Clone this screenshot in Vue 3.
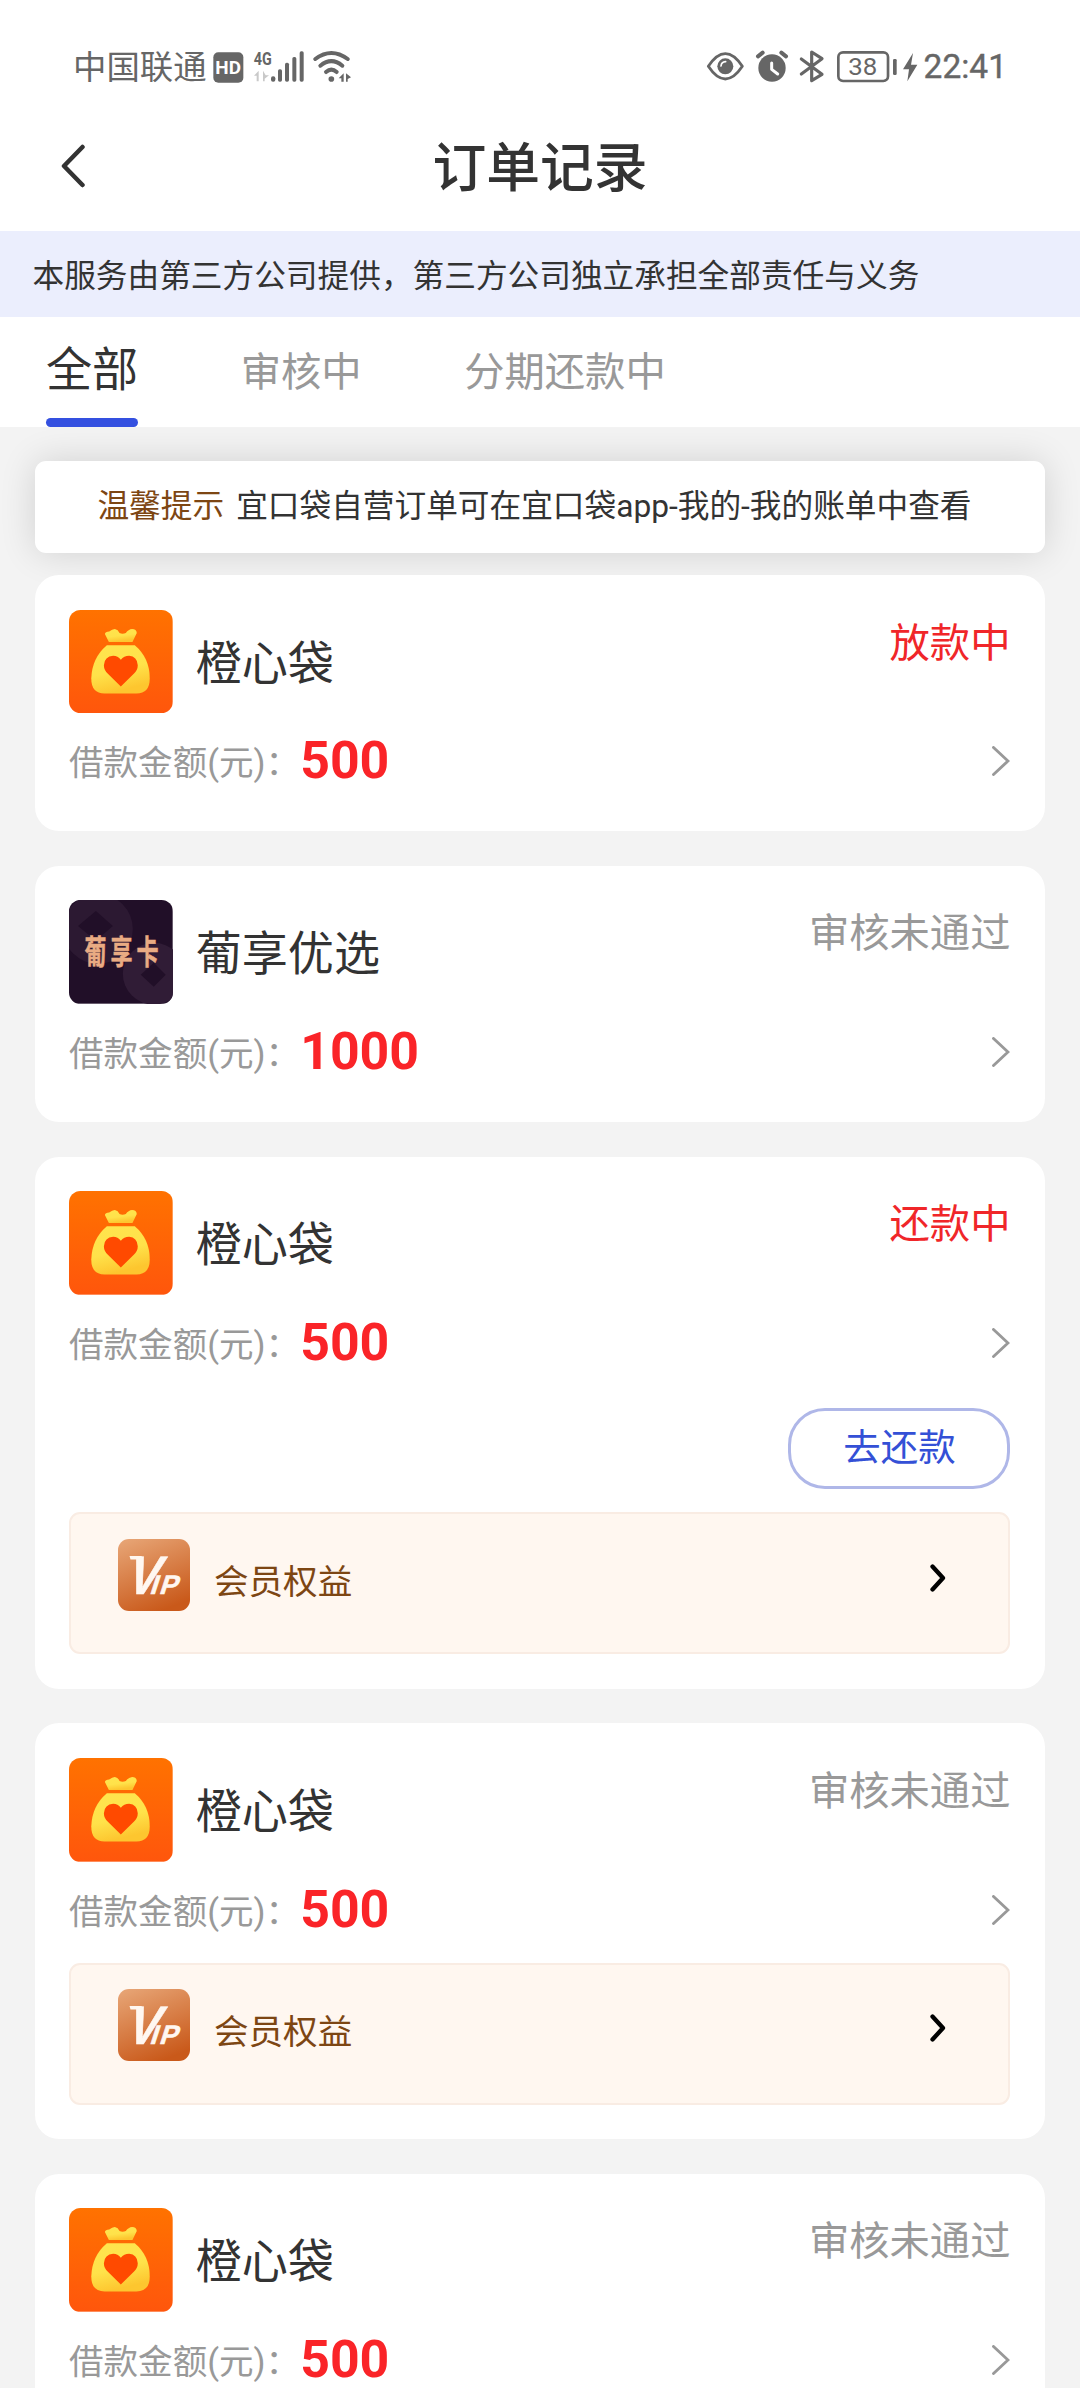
<script setup>
const notice = '本服务由第三方公司提供，第三方公司独立承担全部责任与义务'
const tabs = ['全部', '审核中', '分期还款中']
const orders = [
  { name: '橙心袋', logo: 'bag', status: '放款中', active: true, amount: 500 },
  { name: '葡享优选', logo: 'card', status: '审核未通过', amount: 1000 },
  { name: '橙心袋', logo: 'bag', status: '还款中', active: true, amount: 500, repay: true, vip: true },
  { name: '橙心袋', logo: 'bag', status: '审核未通过', amount: 500, vip: true },
  { name: '橙心袋', logo: 'bag', status: '审核未通过', amount: 500 },
]
</script>

<template>
  <div class="page">
    <div class="statusbar">
      <span class="carrier">中国联通</span>
      <svg class="net" viewBox="515 50 425 110" fill="#666">
        <rect x="519" y="63" width="90" height="91" rx="15" />
        <text x="525" y="129" font-size="56" font-weight="700" fill="#fff" textLength="77" lengthAdjust="spacingAndGlyphs">HD</text>
        <text x="640" y="101" font-size="57" font-weight="700" textLength="54" lengthAdjust="spacingAndGlyphs">4G</text>
        <path d="M641 133l14-15v32h-6v-17zM668 118v32l5 0v-8l13-10h-10z" fill="#c9c9c9" />
        <rect x="692" y="135" width="13" height="16" rx="6" />
        <rect x="713" y="114" width="12" height="37" rx="5" />
        <rect x="734" y="94" width="12" height="57" rx="5" />
        <rect x="756" y="77" width="12" height="74" rx="5" />
        <rect x="778" y="60" width="12" height="91" rx="5" />
        <g fill="none" stroke="#666" stroke-width="12" stroke-linecap="round">
          <path d="M825 83Q873 47 922 83" />
          <path d="M840 103Q873 76 906 103" />
          <path d="M857 122Q873 108 889 122" />
        </g>
        <circle cx="873" cy="143" r="8.5" />
        <path d="M895 141l15-15v25h-7v-10zM917 126l15 12-10 5v8h-5z" />
      </svg>
      <svg class="sys" viewBox="45 50 650 110" fill="#666">
        <path d="M55 105Q80 67 106 67T157 105Q132 143 106 143T55 105z" fill="none" stroke="#666" stroke-width="8.500" stroke-linejoin="round" />
        <circle cx="106" cy="105" r="24" />
        <path d="M93 104q1-12 14-13" fill="none" stroke="#fff" stroke-width="5" stroke-linecap="round" />
        <circle cx="246" cy="110" r="41" />
        <path d="M204 75l14-11M288 75l-14-11" stroke="#666" stroke-width="12" stroke-linecap="round" />
        <path d="M245 95v19l18 14" fill="none" stroke="#fff" stroke-width="9" stroke-linecap="round" stroke-linejoin="round" />
        <path d="M334 83l62 46-31 19V62l31 20-62 46" fill="none" stroke="#666" stroke-width="9.500" stroke-linecap="round" stroke-linejoin="round" />
        <rect x="445" y="63" width="149" height="86" rx="14" fill="none" stroke="#666" stroke-width="8" />
        <rect x="609" y="83" width="11" height="48" rx="4" />
        <text x="475" y="131" font-size="71" textLength="87" lengthAdjust="spacingAndGlyphs">38</text>
        <path d="M669 65l-30 49h18l-5 36 30-50h-19z" />
      </svg>
      <span class="time">22:41</span>
    </div>

    <header class="titlebar">
      <svg class="back" viewBox="0 0 26 44"><path d="M22.500 3L4 22l18.500 19" /></svg>
      <h1>订单记录</h1>
    </header>

    <div class="notice">{{ notice }}</div>

    <nav class="tabs">
      <div v-for="(tab, i) in tabs" :key="tab" class="tab" :class="{ current: i === 0 }">
        <span>{{ tab }}</span>
      </div>
    </nav>

    <div class="tip"><b>温馨提示</b><span>宜口袋自营订单可在宜口袋app-我的-我的账单中查看</span></div>

    <main class="list">
      <section v-for="(order, i) in orders" :key="i" class="card">
        <div class="head">
          <svg v-if="order.logo === 'bag'" class="logo" viewBox="57 60 312 312">
            <defs>
              <linearGradient id="orange" x1="0" y1="0" x2="0" y2="1">
                <stop offset="0" stop-color="#ff7200" /><stop offset="1" stop-color="#ff560c" />
              </linearGradient>
              <linearGradient id="gold" x1="0" y1="0" x2=".3" y2="1">
                <stop offset="0" stop-color="#ffe44e" /><stop offset=".6" stop-color="#ffe24a" /><stop offset="1" stop-color="#fdc62f" />
              </linearGradient>
            </defs>
            <rect x="57" y="60" width="312" height="312" fill="url(#orange)" />
            <path d="M177 156L165 132Q166 126 178 125Q187 117 195 117Q205 119 209 129Q218 134 228 129Q236 118 247 117Q260 117 261 129L248 156z" fill="url(#gold)" />
            <path d="M171 166H255Q300 204 300 266Q300 311 260 311H164Q124 311 124 266Q126 204 171 166z" fill="url(#gold)" />
            <path d="M213 290L174 252Q162 240 162 226Q164 200 190 198Q204 198 213 210Q222 198 238 198Q262 200 264 226Q264 240 252 252z" fill="#ff4a00" />
          </svg>
          <svg v-else class="logo" viewBox="0 0 104 104">
            <rect width="104" height="104" fill="#210f28" />
            <circle cx="29" cy="29" r="35" fill="#2c1932" />
            <path d="M27 11L44 26 27 41 9 26z" fill="#210f28" />
            <circle cx="85" cy="74" r="31" fill="#301c36" />
            <path d="M85 63L97 75 85 87 72 75z" fill="#210f28" />
            <g class="brand" transform="translate(15.500 64.500) scale(.67 1)"><text letter-spacing="6">葡享卡</text></g>
          </svg>
          <span class="name">{{ order.name }}</span>
          <span class="status" :class="{ active: order.active }">{{ order.status }}</span>
        </div>
        <div class="sum">
          <span class="label">借款金额(元)：</span>
          <span class="amount">{{ order.amount }}</span>
          <svg class="more" viewBox="0 0 18 30"><path d="M1.500 1.500L16 15 1.500 28.500" /></svg>
        </div>
        <div v-if="order.repay" class="actions"><button>去还款</button></div>
        <div v-if="order.vip" class="vip" :class="{ spaced: order.repay }">
          <svg class="vip-logo" viewBox="0 0 72 72">
            <defs>
              <linearGradient id="bronze" x1=".2" y1="0" x2=".6" y2="1">
                <stop offset="0" stop-color="#e6a272" /><stop offset="1" stop-color="#c9591a" />
              </linearGradient>
            </defs>
            <rect width="72" height="72" rx="11" fill="url(#bronze)" />
            <path d="M11.500 17h12l1 3.500H12.500z" fill="#fff7f0" />
            <g fill="#fff7f0" stroke="#fff7f0" stroke-width=".6" font-weight="700" transform="translate(0 55) skewX(-18)">
              <text><tspan x="6" font-size="54" textLength="32" lengthAdjust="spacingAndGlyphs">V</tspan><tspan x="31" font-size="27">I</tspan><tspan x="40.500" font-size="27">P</tspan></text>
            </g>
          </svg>
          <span class="vip-text">会员权益</span>
          <svg class="go" viewBox="0 0 16 28"><path d="M2.500 2.500L13 14 2.500 25.500" /></svg>
        </div>
      </section>
    </main>
  </div>
</template>

<style>
body {
  margin: 0;
}
</style>

<style scoped>
.page {
  width: 1080px;
  height: 2388px;
  overflow: hidden;
  background: #f3f3f3;
  color: #333;
  font-family: Roboto, 'Noto Sans CJK SC', sans-serif;
}
.page * {
  box-sizing: border-box;
}
svg {
  display: block;
  flex: none;
}
.statusbar {
  display: flex;
  align-items: center;
  height: 102px;
  padding: 31px 73px 0 73px;
  background: #fff;
  color: #666;
  white-space: nowrap;
}
.carrier {
  width: 138.700px;
  padding-top: 2px;
  font-size: 33.400px;
  line-height: 50px;
}
.net {
  width: 141.700px;
  height: 36.700px;
}
.sys {
  width: 216.700px;
  height: 36.700px;
  margin-left: auto;
}
.time {
  margin-left: 2px;
  font-size: 33.500px;
  line-height: 50px;
  -webkit-text-stroke: .4px #666;
}
.titlebar {
  display: flex;
  align-items: center;
  height: 129px;
  padding-left: 60px;
  background: #fff;
}
.back {
  width: 26px;
  height: 44px;
  margin-bottom: 2px;
}
.back path {
  fill: none;
  stroke: #333;
  stroke-width: 4.500;
  stroke-linecap: round;
  stroke-linejoin: round;
}
h1 {
  flex: 1;
  margin: 4px 86px 0 0;
  font-size: 53.800px;
  line-height: 80px;
  font-weight: 500;
  text-align: center;
}
.notice {
  height: 86px;
  padding-left: 32.500px;
  background: #ebeefd;
  font-size: 31.680px;
  line-height: 91px;
  white-space: nowrap;
}
.tabs {
  display: flex;
  gap: 102.500px;
  height: 110px;
  padding-left: 46px;
  background: #fff;
  color: #999;
  font-size: 40.320px;
  line-height: 111px;
}
.tab.current {
  position: relative;
  color: #333;
  font-size: 46.080px;
  line-height: 107px;
}
.tab.current::after {
  content: '';
  position: absolute;
  left: 0;
  right: 0;
  bottom: 0;
  height: 9px;
  border-radius: 4.500px;
  background: #3450e0;
}
.tip {
  display: flex;
  justify-content: center;
  gap: 12px;
  height: 92px;
  margin: 34px 35px 22px;
  padding-right: 11px;
  border-radius: 11px;
  background: #fff;
  box-shadow: 0 0 36px rgba(0, 0, 0, .14);
  font-size: 31.680px;
  line-height: 92px;
  white-space: nowrap;
}
.tip b {
  color: #7d4613;
  font-weight: 400;
}
.list {
  display: flex;
  flex-direction: column;
  gap: 34.500px;
  padding: 0 35px;
}
.card {
  padding: 34.560px 34.560px 34.560px 34px;
  border-radius: 24px;
  background: #fff;
}
.head {
  display: flex;
  height: 103.680px;
}
.logo {
  width: 103.680px;
  height: 103.680px;
  border-radius: 11.500px;
}
.brand {
  fill: #e9ab83;
  stroke: #e9ab83;
  stroke-width: .5;
  font-family: 'Noto Sans CJK SC', sans-serif;
  font-size: 33px;
  font-weight: 700;
}
.name {
  margin-left: 23px;
  font-size: 46.080px;
  line-height: 109px;
}
.status {
  margin-left: auto;
  color: #999;
  font-size: 40.320px;
  line-height: 67px;
}
.status.active {
  color: #f02629;
}
.sum {
  display: flex;
  align-items: center;
  height: 83.500px;
  padding-top: 13px;
  white-space: nowrap;
}
.label {
  margin-top: 4px;
  color: #999;
  font-size: 34.560px;
  line-height: 50px;
}
.amount {
  color: #fa2428;
  font-size: 51.840px;
  font-weight: 700;
  line-height: 60px;
}
.more {
  width: 18px;
  height: 30px;
  margin-left: auto;
}
.more path {
  fill: none;
  stroke: #999;
  stroke-width: 2.900;
  stroke-linecap: round;
}
.actions {
  display: flex;
  justify-content: flex-end;
  margin-top: 29.600px;
}
button {
  width: 222px;
  height: 81px;
  padding: 0 0 6px;
  border: 3px solid #afb7e8;
  border-radius: 37px;
  background: #fff;
  color: #3450d6;
  font-family: inherit;
  font-size: 37.440px;
}
.vip {
  display: flex;
  height: 142px;
  margin-top: 17.700px;
  padding: 24.500px 62px 0 47px;
  border: 2px solid #f9ece3;
  border-radius: 11px;
  background: #fff7f0;
}
.vip.spaced {
  margin-top: 23.500px;
}
.vip-logo {
  width: 72px;
  height: 72px;
  font-family: 'Liberation Sans', sans-serif;
}
.vip-text {
  margin-left: 24px;
  color: #7d4613;
  font-size: 34.560px;
  line-height: 87px;
}
.go {
  width: 16px;
  height: 28px;
  margin: 25px 0 0 auto;
}
.go path {
  fill: none;
  stroke: #000;
  stroke-width: 4.300;
  stroke-linecap: round;
  stroke-linejoin: round;
}
</style>
